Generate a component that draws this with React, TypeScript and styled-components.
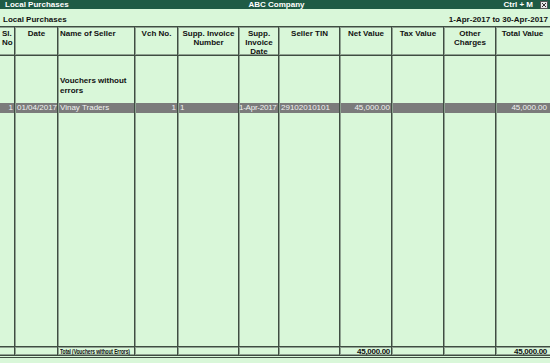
import React from 'react'
import styled, { createGlobalStyle } from 'styled-components'

const GlobalStyle = createGlobalStyle`
  html, body {
    margin: 0;
    padding: 0;
    background: #d9f7d9;
  }
  * {
    box-sizing: border-box;
  }
`

const COLS = '15px 43px 77px 43px 61px 40px 61px 52px 52px 52px 52px'
const LINE = '#3f4d42'
const HALO = '#8fa291'

const Screen = styled.div`
  width: 550px;
  height: 363px;
  overflow: hidden;
  background: #d9f7d9;
  font-family: 'Liberation Sans', Arial, sans-serif;
  font-size: 8px;
  color: #111;
  display: flex;
  flex-direction: column;
`

const TitleBar = styled.div`
  height: 9px;
  flex: none;
  background: #1f5b45;
  color: #fff;
  font-weight: bold;
  line-height: 9px;
  display: grid;
  grid-template-columns: 1fr auto 1fr;
  padding: 0 2px 0 5px;
`

const TitleLeft = styled.span``

const TitleCenter = styled.span`
  text-align: center;
`

const TitleRight = styled.span`
  display: flex;
  justify-content: flex-end;
  align-items: center;
  gap: 7px;
`

const CloseBox = styled.span`
  width: 8px;
  height: 8px;
  background: #e8e8e8;
  border: 1px solid #555;
  display: flex;
  align-items: center;
  justify-content: center;
`

const ReportHead = styled.div`
  height: 17px;
  flex: none;
  display: flex;
  justify-content: space-between;
  align-items: flex-end;
  font-weight: bold;
  padding: 0 2px 2px 3px;
  line-height: 9px;
`

const Row = styled.div<{ $h: number; $grey?: boolean; $top?: boolean; $bottom?: boolean }>`
  display: grid;
  grid-template-columns: ${COLS};
  height: ${(p) => p.$h}px;
  flex: none;
  background: ${(p) => (p.$grey ? '#7b7b7b' : 'transparent')};
  color: ${(p) => (p.$grey ? '#f2f2f2' : '#111')};
  border-top: ${(p) => (p.$top ? `1px solid ${LINE}` : 'none')};
  border-bottom: ${(p) => (p.$bottom ? `1px solid ${LINE}` : 'none')};
  box-shadow: ${(p) =>
    [p.$top ? `inset 0 1px 0 ${HALO}` : '', p.$bottom ? `inset 0 -1px 0 ${HALO}` : '']
      .filter(Boolean)
      .join(', ') || 'none'};
  line-height: ${(p) => (p.$grey ? '10px' : '9px')};
`

const FillRow = styled(Row)`
  flex: 1;
  height: auto;
`

const Cell = styled.div<{ $align?: 'left' | 'right' | 'center'; $flush?: boolean }>`
  border-right: 1px solid ${LINE};
  box-shadow: 1px 0 0 ${HALO};
  text-align: ${(p) => p.$align || 'left'};
  padding: ${(p) => (p.$flush ? '0' : '0 1px 0 2px')};
  white-space: nowrap;
  overflow: hidden;
  &:last-child {
    border-right: none;
    box-shadow: none;
  }
`

const HeadCell = styled(Cell)`
  white-space: normal;
  padding-top: 2px;
  font-weight: bold;
`

const GroupCell = styled(Cell)`
  white-space: normal;
  padding-top: 20px;
  font-weight: bold;
  line-height: 10px;
`

const Tight = styled.span`
  letter-spacing: -0.25px;
`

const Condensed = styled.span`
  display: inline-block;
  font-weight: bold;
  transform: scaleX(0.62);
  transform-origin: left center;
  letter-spacing: -0.2px;
`

const TotalNum = styled.span`
  font-weight: bold;
  letter-spacing: -0.3px;
`

const Footer = styled.div`
  height: 6px;
  flex: none;
  border-top: 1px solid ${LINE};
  margin-top: 1px;
`

const headers: { label: string; align: 'left' | 'center' }[] = [
  { label: 'Sl. No', align: 'left' },
  { label: 'Date', align: 'center' },
  { label: 'Name of Seller', align: 'left' },
  { label: 'Vch No.', align: 'center' },
  { label: 'Supp. Invoice Number', align: 'center' },
  { label: 'Supp. Invoice Date', align: 'center' },
  { label: 'Seller TIN', align: 'center' },
  { label: 'Net Value', align: 'center' },
  { label: 'Tax Value', align: 'center' },
  { label: 'Other Charges', align: 'center' },
  { label: 'Total Value', align: 'center' },
]

const emptyCells = (n: number) => Array.from({ length: n }, (_, i) => <Cell key={i} />)

export default function App() {
  return (
    <Screen>
      <GlobalStyle />
      <TitleBar>
        <TitleLeft>Local Purchases</TitleLeft>
        <TitleCenter>ABC Company</TitleCenter>
        <TitleRight>
          <span>Ctrl + M</span>
          <CloseBox>
            <svg width="6" height="6" viewBox="0 0 6 6">
              <path d="M1 1 L5 5 M5 1 L1 5" stroke="#333" strokeWidth="1" />
            </svg>
          </CloseBox>
        </TitleRight>
      </TitleBar>

      <ReportHead>
        <span>Local Purchases</span>
        <span>1-Apr-2017 to 30-Apr-2017</span>
      </ReportHead>

      <Row $h={30} $top $bottom>
        {headers.map((h) => (
          <HeadCell key={h.label} $align={h.align}>
            {h.label}
          </HeadCell>
        ))}
      </Row>

      <Row $h={47}>
        <Cell />
        <Cell />
        <GroupCell>Vouchers without errors</GroupCell>
        {emptyCells(8)}
      </Row>

      <Row $h={10} $grey>
        <Cell $align="right">1</Cell>
        <Cell>01/04/2017</Cell>
        <Cell>Vinay Traders</Cell>
        <Cell $align="right">1</Cell>
        <Cell>1</Cell>
        <Cell $flush>
          <Tight>1-Apr-2017</Tight>
        </Cell>
        <Cell>29102010101</Cell>
        <Cell $align="right">45,000.00</Cell>
        <Cell />
        <Cell />
        <Cell $align="right">45,000.00</Cell>
      </Row>

      <FillRow $h={0}>{emptyCells(11)}</FillRow>

      <Row $h={10} $top $bottom>
        <Cell />
        <Cell />
        <Cell>
          <Condensed>Total (Vouchers without Errors)</Condensed>
        </Cell>
        <Cell />
        <Cell />
        <Cell />
        <Cell />
        <Cell $align="right">
          <TotalNum>45,000.00</TotalNum>
        </Cell>
        <Cell />
        <Cell />
        <Cell $align="right">
          <TotalNum>45,000.00</TotalNum>
        </Cell>
      </Row>

      <Footer />
    </Screen>
  )
}
